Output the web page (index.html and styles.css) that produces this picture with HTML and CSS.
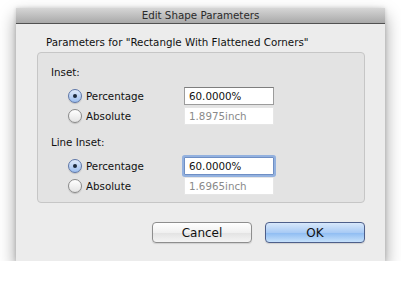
FILE: index.html
```html
<!DOCTYPE html>
<html lang="en">
  <head>
    <meta charset="UTF-8" />
    <title>Edit Shape Parameters</title>
    <link rel="stylesheet" href="styles.css">
  </head>
  <body>
    <div class="window">
      <div class="titlebar">Edit Shape Parameters</div>
      <div class="content">
        <div class="caption">Parameters for "Rectangle With Flattened Corners"</div>
        <div class="group">
          <div class="section-title">Inset:</div>
          <div class="row">
            <label class="radio"><span class="dot checked"></span>Percentage</label>
            <div class="field">60.0000%</div>
          </div>
          <div class="row">
            <label class="radio"><span class="dot"></span>Absolute</label>
            <div class="field disabled">1.8975inch</div>
          </div>

          <div class="section-title second">Line Inset:</div>
          <div class="row">
            <label class="radio"><span class="dot checked"></span>Percentage</label>
            <div class="field focused">60.0000%</div>
          </div>
          <div class="row">
            <label class="radio"><span class="dot"></span>Absolute</label>
            <div class="field disabled">1.6965inch</div>
          </div>
        </div>
        <div class="buttons">
          <button class="btn">Cancel</button>
          <button class="btn default">OK</button>
        </div>
      </div>
    </div>
  </body>
</html>
```

FILE: styles.css
```css
body {
  margin: 0;
  background-color: #ffffff;
  font-family: "DejaVu Sans", sans-serif;
  font-size: 10.3px;
  color: #111;
}

.window {
  margin: 8px 0 0 16px;
  width: 369px;
  height: 253px;
  background-color: #ececec;
  box-shadow: 0 8px 16px rgba(0, 0, 0, 0.4), 0 0 4px rgba(0, 0, 0, 0.15);
}

.titlebar {
  height: 15px;
  line-height: 15px;
  text-align: center;
  color: #2a2a2a;
  background: linear-gradient(#d6d6d6, #a9a9a9);
  border-bottom: 1px solid #515151;
}

.content {
  padding: 10px 20px 0 21px;
}

.caption {
  padding-left: 9px;
  height: 18px;
  line-height: 16px;
}

.group {
  height: 151px;
  box-sizing: border-box;
  padding: 11px 0 0 30px;
  background-color: #e3e3e3;
  border: 1px solid #c6c6c6;
  border-radius: 4px;
}

.section-title {
  margin-left: -17px;
  line-height: 16px;
  margin-bottom: 7px;
}

.section-title.second {
  margin-top: 9px;
}

.row {
  display: flex;
  align-items: center;
  height: 18px;
  margin-bottom: 2px;
}

.radio {
  display: flex;
  align-items: center;
  width: 116px;
  gap: 4px;
}

.dot {
  box-sizing: border-box;
  width: 14px;
  height: 14px;
  border-radius: 50%;
  border: 1px solid #8a8a8a;
  background: linear-gradient(#ffffff, #e4e4e4);
  box-shadow: 0 1px 1px rgba(0, 0, 0, 0.15);
  position: relative;
}

.dot.checked {
  border-color: #5d76a8;
  background: linear-gradient(#dfeafa, #9dbfef);
}

.dot.checked::after {
  content: "";
  position: absolute;
  left: 4px;
  top: 4px;
  width: 4px;
  height: 4px;
  border-radius: 50%;
  background-color: #1d2a3c;
}

.field {
  box-sizing: border-box;
  width: 90px;
  height: 18px;
  line-height: 16px;
  padding-left: 4px;
  background-color: #ffffff;
  border: 1px solid #9c9c9c;
  border-top-color: #7e7e7e;
}

.field.disabled {
  color: #8a8a8a;
  border-color: #e6e6e6;
}

.field.focused {
  border-color: #6f8fc4;
  box-shadow: 0 0 0 2px #93b1df;
  border-radius: 1px;
}

.buttons {
  display: flex;
  justify-content: flex-end;
  gap: 13px;
  margin-top: 19px;
}

.btn {
  box-sizing: border-box;
  width: 100px;
  height: 21px;
  padding: 0;
  font-family: "DejaVu Sans", sans-serif;
  font-size: 12px;
  color: #111;
  border: 1px solid #8e8e8e;
  border-radius: 4px;
  background: linear-gradient(#ffffff, #f0f0f0 50%, #e2e2e2 51%, #f4f4f4);
  box-shadow: 0 1px 1px rgba(0, 0, 0, 0.12);
}

.btn.default {
  border-color: #4e5f8a;
  background: linear-gradient(#d8e8fb, #a9cbf5 50%, #8dbbf2 51%, #c6e1fb);
}
```
